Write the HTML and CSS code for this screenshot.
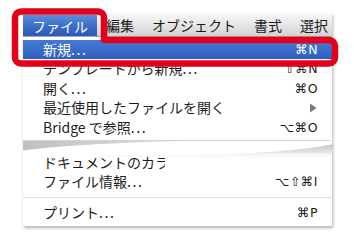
FILE: index.html
```html
<!DOCTYPE html>
<html lang="ja">
<head>
<meta charset="utf-8">
<link rel="stylesheet" href="styles.css">
</head>
<body>
<div class="stage">
  <div class="menubar">
    <span class="mb-item active">ファイル</span>
    <span class="mb-item">編集</span>
    <span class="mb-item">オブジェクト</span>
    <span class="mb-item">書式</span>
    <span class="mb-item">選択</span>
  </div>
  <div class="menu">
    <div class="sec sec-top">
      <div class="row hl"><span class="label">新規<span class="dots">...</span></span><span class="key">⌘N</span></div>
      <div class="row"><span class="label">テンプレートから新規<span class="dots">...</span></span><span class="key">⇧⌘N</span></div>
      <div class="row"><span class="label">開く<span class="dots">...</span></span><span class="key">⌘O</span></div>
      <div class="row"><span class="label">最近使用したファイルを開く</span><svg class="arrow" width="8" height="10" viewBox="0 0 8 10"><path d="M1 0.5 L7.5 5 L1 9.5 Z" fill="#7a7a7a"/></svg></div>
      <div class="row"><span class="label">Bridge で参照<span class="dots">...</span></span><span class="key">⌥⌘O</span></div>
    </div>
    <svg class="tear" width="309" height="16" viewBox="0 0 309 16">
      <defs>
        <linearGradient id="sh" x1="0" y1="0" x2="1" y2="0">
          <stop offset="0" stop-color="#c0c0c0"/>
          <stop offset="0.5" stop-color="#dedede"/>
          <stop offset="1" stop-color="#ebebeb"/>
        </linearGradient>
        <linearGradient id="sh2" x1="0" y1="0" x2="0" y2="1">
          <stop offset="0" stop-color="#c2c2c2"/>
          <stop offset="1" stop-color="#ffffff" stop-opacity="0"/>
        </linearGradient>
      </defs>
      <rect x="0" y="3.5" width="309" height="12.5" fill="url(#sh)"/>
      <line x1="2" y1="3.5" x2="307" y2="3.5" stroke="#d2d2d2" stroke-width="1"/>
      <path d="M0 13.5 C40 8.5 100 5 165 4 H309 V7.5 C262 17 170 20 70 17.5 C40 16.8 15 16.3 0 16 Z" fill="#ffffff"/>
      <path d="M70 17.5 C170 20 262 17 309 7.5 V19 C262 27 170 26 70 17.5 Z" fill="url(#sh2)"/>
    </svg>
    <div class="sec sec-bottom">
      <div class="row"><span class="label clip">ドキュメントのカラー<span class="dots">...</span></span></div>
      <div class="row"><span class="label">ファイル情報<span class="dots">...</span></span><span class="key">⌥⇧⌘I</span></div>
      <div class="sep"></div>
      <div class="row"><span class="label">プリント<span class="dots">...</span></span><span class="key">⌘P</span></div>
    </div>
  </div>
  <svg class="outline" width="354" height="80" viewBox="0 0 354 80">
    <path d="M21 11.5 H98 A6 6 0 0 1 104 17.5 V40 H329 A6 6 0 0 1 335 46 V57.5 A6 6 0 0 1 329 63.5 H21 A6 6 0 0 1 15 57.5 V17.5 A6 6 0 0 1 21 11.5 Z" fill="none" stroke="#e3001b" stroke-width="6.5" stroke-linejoin="round"/>
  </svg>
</div>
</body>
</html>
```

FILE: styles.css
```css
html, body {
  margin: 0;
  padding: 0;
  background: #ffffff;
}

body {
  width: 354px;
  height: 245px;
  overflow: hidden;
  font-family: "Noto Sans CJK JP", "Noto Sans", sans-serif;
  color: #1c1c1c;
}

.stage {
  position: relative;
  padding: 14px 0 0 23px;
}

.menubar {
  display: flex;
  width: 309px;
  height: 23px;
  background: linear-gradient(#f6f6f6, #e6e6e6 50%, #d2d2d2);
  border-bottom: 1px solid #a8a8a8;
  box-sizing: border-box;
  box-shadow: 2px 1px 2px rgba(0, 0, 0, 0.18);
  overflow: hidden;
}

.mb-item {
  padding: 0 9px;
  font-size: 14px;
  line-height: 23px;
  white-space: nowrap;
  color: #1a1a1a;
}

.mb-item.active {
  background: linear-gradient(#5d8ee0, #3a6cc8 55%, #2958b6);
  color: #ffffff;
  margin-top: 1px;
  line-height: 22px;
}

.menu {
  width: 309px;
  background: #ffffff;
  box-shadow: 1px 2px 3px rgba(0, 0, 0, 0.3);
  padding: 2.5px 0 4px 0;
}

.sec-top .row {
  height: 19.5px;
  line-height: 19.5px;
}

.sec-bottom .row {
  height: 19px;
  line-height: 19px;
}

.row {
  display: flex;
  justify-content: space-between;
  align-items: center;
  padding: 0 14px 0 20px;
  font-size: 14px;
  white-space: nowrap;
}

.row.hl {
  background: linear-gradient(#4679d4, #2f60bf);
  color: #ffffff;
}

.dots {
  letter-spacing: 1.6px;
}

.key {
  font-family: "DejaVu Sans", sans-serif;
  font-size: 12.5px;
  letter-spacing: 0.5px;
  color: #1c1c1c;
}

.row.hl .key {
  color: #ffffff;
}

.arrow {
  display: block;
  margin-right: 1px;
}

.label.clip {
  display: block;
  width: 122px;
  overflow: hidden;
}

.tear {
  display: block;
  overflow: visible;
}

.sep {
  height: 1px;
  background: #dedede;
  margin: 5.5px 0 5.5px 0;
}

.outline {
  position: absolute;
  left: 0;
  top: 0;
  pointer-events: none;
}
```
